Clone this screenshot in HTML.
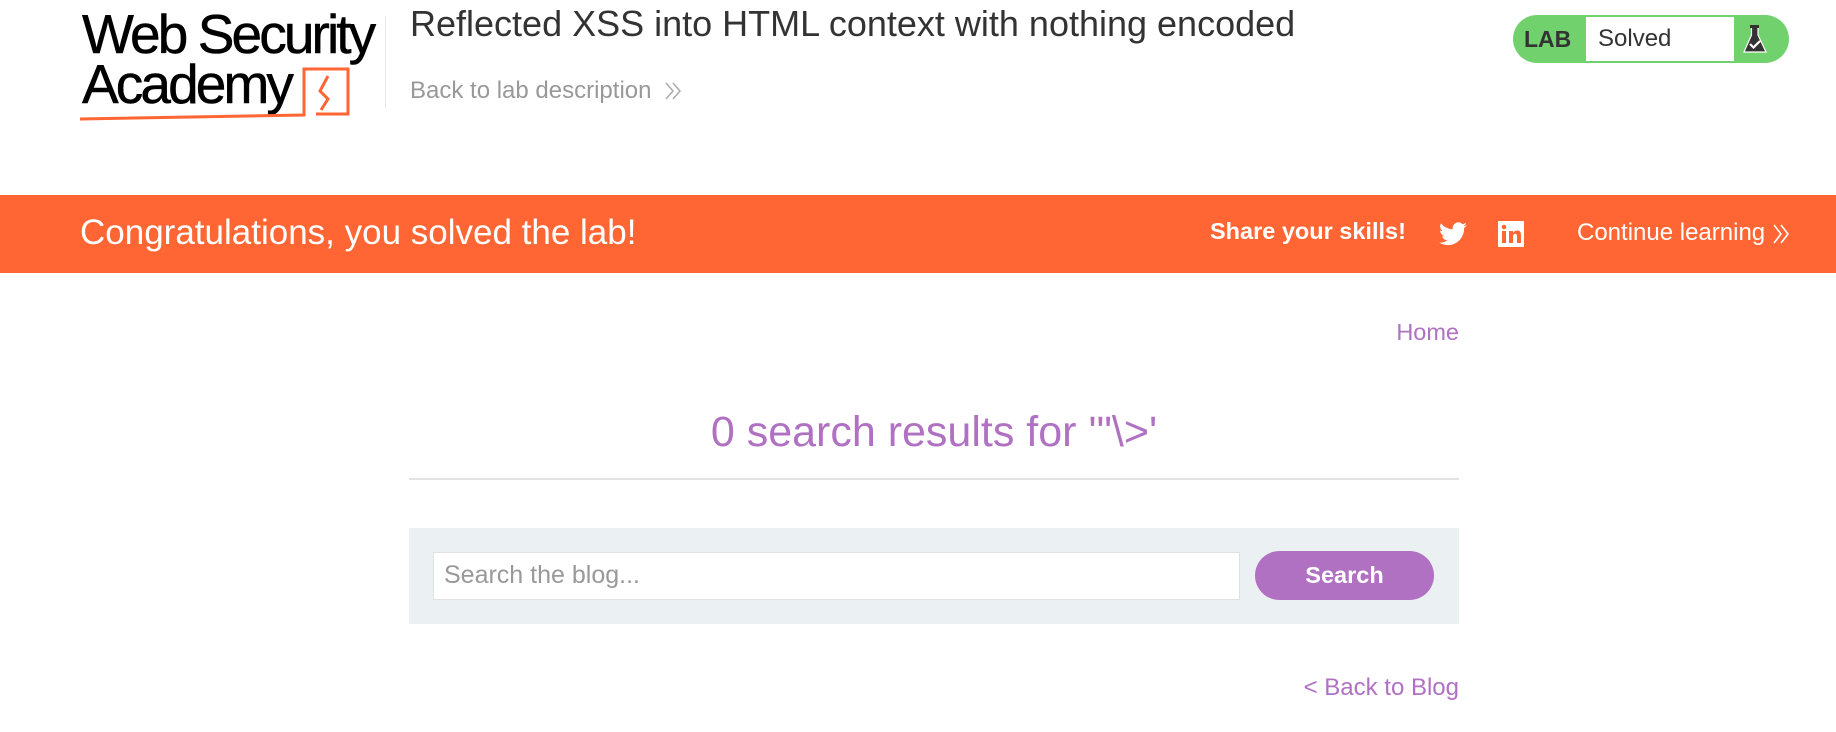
<!DOCTYPE html>
<html><head><meta charset="utf-8"><style>
*{margin:0;padding:0;box-sizing:border-box}
body{width:1836px;height:732px;overflow:hidden;background:#fff;font-family:"Liberation Sans",Arial,sans-serif;position:relative}
.a{position:absolute;white-space:nowrap}
</style></head><body>
<!-- logo -->
<div class="a" style="left:82px;top:9px;font-size:55px;letter-spacing:-2.9px;line-height:50px;color:#000;-webkit-text-stroke:0.5px #000">Web Security<br>Academy</div>
<svg class="a" style="left:76px;top:66px" width="280" height="60" viewBox="0 0 280 60">
<path d="M4 53 Q100 51 228 49 L228 3 L272 3 L272 48 L240 48" fill="none" stroke="#ff6633" stroke-width="3"/>
<path d="M252 10 L244 25 L252 33 L245 44" fill="none" stroke="#ff6633" stroke-width="3"/>
</svg>
<div class="a" style="left:385px;top:16px;width:1px;height:92px;background:#e6e6e6"></div>
<div class="a" style="left:410px;top:3px;font-size:36px;color:#333">Reflected XSS into HTML context with nothing encoded</div>
<div class="a" style="left:410px;top:77px;font-size:24px;color:#999">Back to lab description</div>
<svg class="a" style="left:664px;top:81px" width="18" height="20" viewBox="0 0 18 20"><path d="M2 2 L9 10 L2 18 M9 2 L16 10 L9 18" fill="none" stroke="#aaa" stroke-width="1.5"/></svg>
<!-- badge -->
<div class="a" style="left:1513px;top:15px;width:276px;height:48px;border-radius:24px;background:#70d16d"></div>
<div class="a" style="left:1524px;top:26px;font-size:23px;font-weight:bold;color:#333">LAB</div>
<div class="a" style="left:1586px;top:17px;width:148px;height:44px;background:#fff"></div>
<div class="a" style="left:1598px;top:25px;font-size:24px;color:#333">Solved</div>
<svg class="a" style="left:1742px;top:24px" width="26" height="32" viewBox="0 0 26 32">
<rect x="8" y="1" width="9" height="3" fill="#333"/><path d="M9.5 4 L9.5 11 L2 28 L24 28 L16 11 L16 4" fill="#333" stroke="#fff" stroke-width="1.2"/>
<path d="M8 20 L11.5 23.5 L18 17" fill="none" stroke="#fff" stroke-width="2.2"/></svg>
<!-- banner -->
<div class="a" style="left:0;top:195px;width:1836px;height:78px;background:#ff6633"></div>
<div class="a" style="left:80px;top:213px;font-size:35px;color:#fff">Congratulations, you solved the lab!</div>
<div class="a" style="left:1210px;top:218px;font-size:23.5px;font-weight:bold;color:#fff">Share your skills!</div>
<svg class="a" style="left:1439px;top:222px" width="28" height="24" viewBox="0 0 24 20"><path fill="#fff" d="M24 2.4a9.8 9.8 0 0 1-2.8.8A4.9 4.9 0 0 0 23.3.4a9.9 9.9 0 0 1-3.1 1.2A4.9 4.9 0 0 0 11.8 6 14 14 0 0 1 1.7.9a4.9 4.9 0 0 0 1.5 6.6A4.9 4.9 0 0 1 1 6.9 4.9 4.9 0 0 0 4.9 11.8a4.9 4.9 0 0 1-2.2.1 4.9 4.9 0 0 0 4.6 3.4A9.9 9.9 0 0 1 0 17.3 14 14 0 0 0 7.5 19.5c9.1 0 14-7.5 14-14v-.6A10 10 0 0 0 24 2.4z"/></svg>
<svg class="a" style="left:1498px;top:221px" width="26" height="26" viewBox="0 0 26 26"><rect width="26" height="26" fill="#fff"/><rect x="4" y="10" width="4" height="12" fill="#ff6633"/><circle cx="6" cy="6" r="2.3" fill="#ff6633"/><path d="M11 10h4v2c1-2 3-2.5 4.5-2.5 3 0 3.5 2.5 3.5 5V22h-4v-6.5c0-1.5-.3-2.8-1.8-2.8S15 14 15 15.5V22h-4z" fill="#ff6633"/></svg>
<div class="a" style="left:1577px;top:219px;font-size:24px;color:#fff">Continue learning</div>
<svg class="a" style="left:1772px;top:223px" width="18" height="22" viewBox="0 0 18 22"><path d="M2 2 L9 11 L2 20 M9 2 L16 11 L9 20" fill="none" stroke="#fff" stroke-width="1.6"/></svg>
<!-- content -->
<div class="a" style="left:1359px;top:319px;font-size:23.5px;color:#b071c3;width:100px;text-align:right">Home</div>
<div class="a" style="left:409px;top:408px;width:1050px;text-align:center;font-size:43px;color:#b071c3">0 search results for '"\&gt;'</div>
<div class="a" style="left:409px;top:478px;width:1050px;height:2px;background:#e3e3e3"></div>
<div class="a" style="left:409px;top:528px;width:1050px;height:96px;background:#ebf0f2"></div>
<div class="a" style="left:433px;top:552px;width:807px;height:48px;background:#fff;border:1px solid #e0e0e0"></div>
<div class="a" style="left:444px;top:561px;font-size:25px;color:#999">Search the blog...</div>
<div class="a" style="left:1255px;top:551px;width:179px;height:49px;border-radius:25px;background:#b071c3;color:#fff;font-weight:bold;font-size:23.5px;text-align:center;line-height:49px">Search</div>
<div class="a" style="left:1259px;top:674px;width:200px;text-align:right;font-size:24px;color:#b071c3">&lt; Back to Blog</div>
</body></html>
